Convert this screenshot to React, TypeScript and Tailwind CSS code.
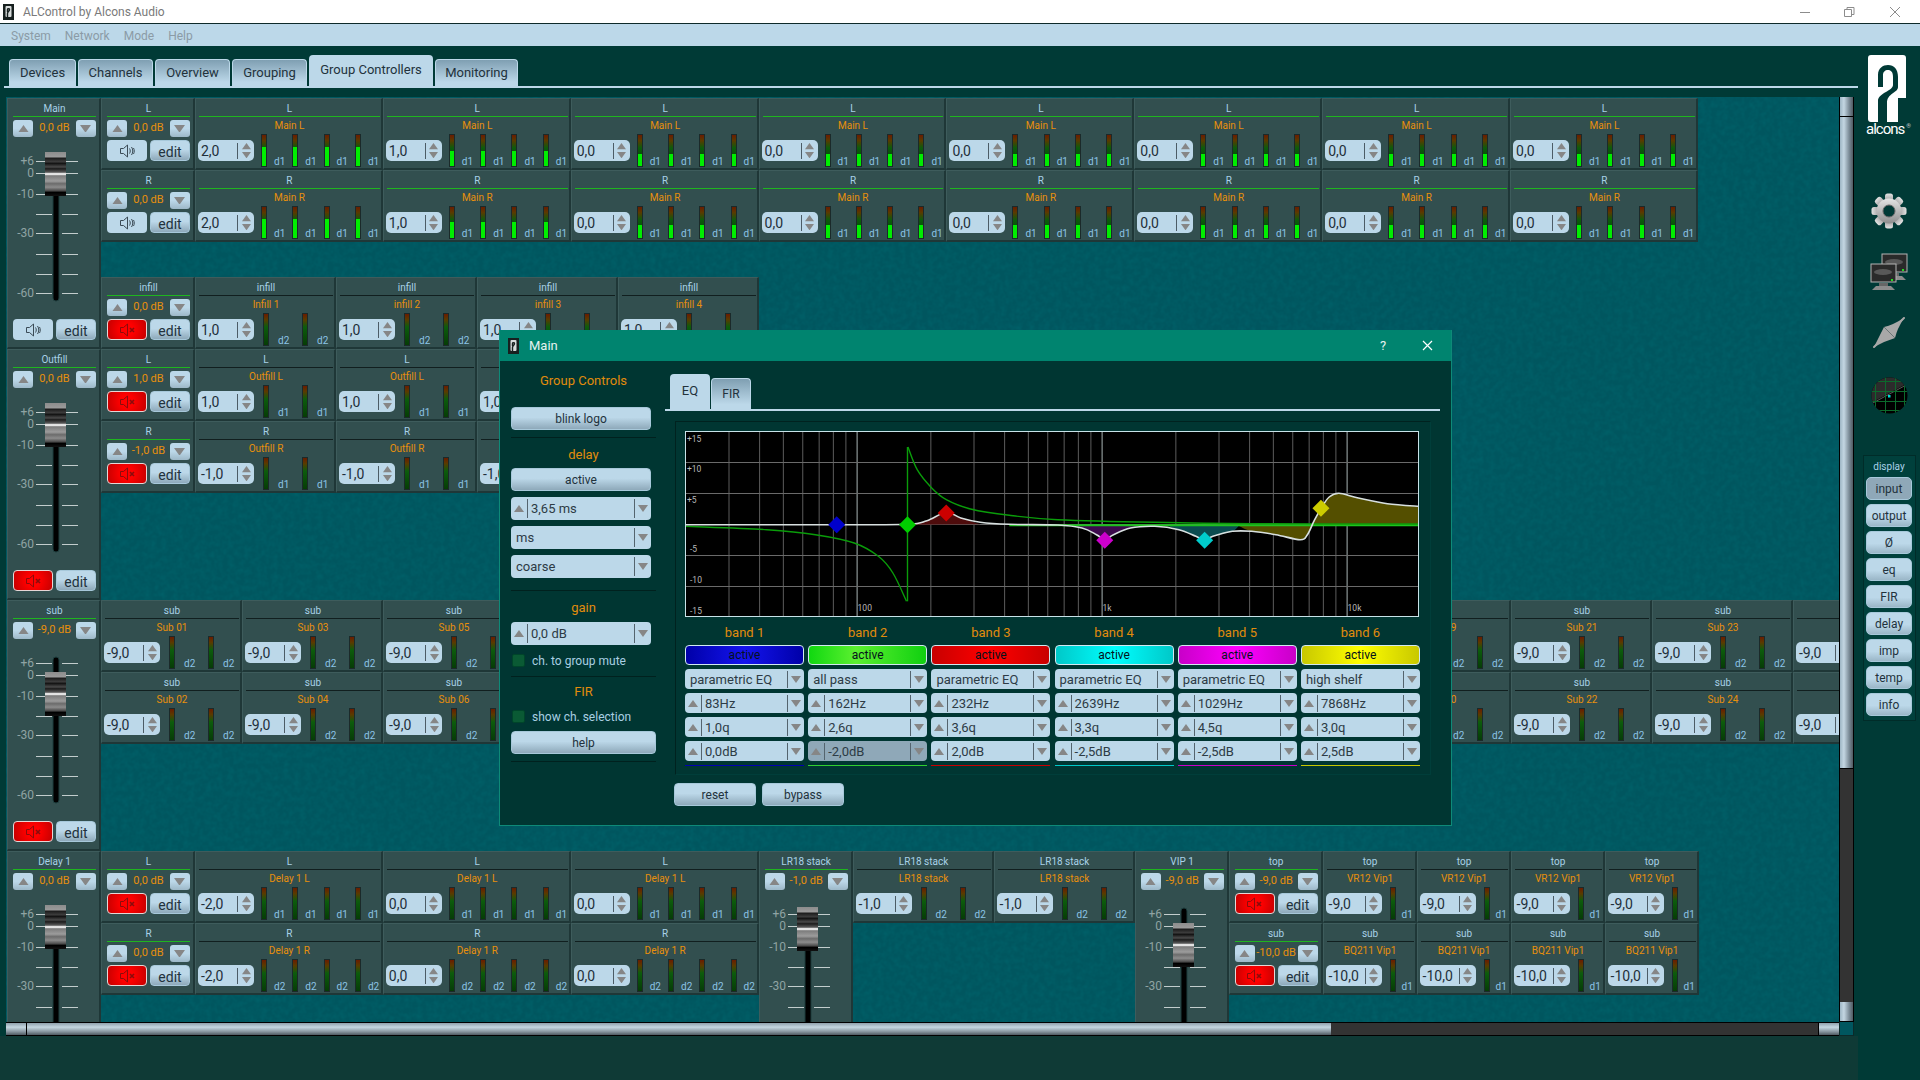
import type { ReactNode } from "react";

const FONT = "font-['Roboto','Noto_Sans',sans-serif]";
const GRADIENT_BTN =
  "bg-[linear-gradient(180deg,#bcd8e9_45%,#8ea9ba_100%)] border border-[#a7c8da] text-[#22323c]";

function Tri({ dir, size = 10 }: { dir: "up" | "down"; size?: number }) {
  return (
    <svg width={size} height={size * 0.7} viewBox="0 0 10 7">
      <polygon points={dir === "up" ? "5,0 10,7 0,7" : "0,0 10,0 5,7"} fill="#868686" />
    </svg>
  );
}

function Speaker({ muted }: { muted?: boolean }) {
  const c = muted ? "#8a0c0c" : "#3b4b56";
  return (
    <svg width="17" height="14" viewBox="0 0 17 14" fill="none" stroke={c} strokeWidth="1">
      <path d="M1.5 4.5h3l4-3.5v12l-4-3.5h-3z" />
      {muted ? (
        <path d="M11 5l4 4M15 5l-4 4" strokeWidth="1.6" />
      ) : (
        <>
          <path d="M10.5 4.5c1 1.6 1 3.4 0 5" />
          <path d="M12.5 3c1.7 2.4 1.7 5.6 0 8" />
          <path d="M14.5 4c1 2 1 4 0 6" />
        </>
      )}
    </svg>
  );
}

function MuteBtn({ muted }: { muted?: boolean }) {
  return (
    <div
      className={
        muted
          ? "w-[40px] h-[21px] rounded-[4px] flex items-center justify-center border border-[#e6d6d6] bg-[radial-gradient(circle,#ff0000_30%,#c40000_100%)]"
          : "w-[40px] h-[21px] rounded-[4px] flex items-center justify-center bg-[#bcd8e9]"
      }
    >
      <Speaker muted={muted} />
    </div>
  );
}

function EditBtn() {
  return (
    <div className={`w-[40px] h-[21px] rounded-[4px] flex items-center justify-center text-[14px] leading-none pt-[2px] ${GRADIENT_BTN}`}>
      edit
    </div>
  );
}

function StripHead({ title, gain }: { title: string; gain: string }) {
  return (
    <>
      <div className="ml-[5px] mr-[3px] h-[18px] border-b border-[#1fb51f] text-center text-[10px] leading-[19px] text-[#a9d2e8] whitespace-nowrap">
        {title}
      </div>
      <div className="ml-[5px] mr-[3px] mt-[3px] h-[17px] flex items-center justify-between">
        <div className="w-[20px] h-[17px] rounded-[3px] flex items-center justify-center bg-[linear-gradient(180deg,#bcd8e9_50%,#9db8c8)]">
          <Tri dir="up" size={11} />
        </div>
        <span className="text-[11px] text-[#e8900c]">{gain}</span>
        <div className="w-[20px] h-[17px] rounded-[3px] flex items-center justify-center bg-[linear-gradient(180deg,#bcd8e9_50%,#9db8c8)]">
          <Tri dir="down" size={11} />
        </div>
      </div>
    </>
  );
}

const TICKS: [number, string][] = [
  [9, "+6"],
  [21, "0"],
  [42, "-10"],
  [62, ""],
  [81, "-30"],
  [102, ""],
  [122, ""],
  [141, "-60"],
];

function Master({ title, gain, muted, capClass }: { title: string; gain: string; muted?: boolean; capClass: string }) {
  return (
    <div className="w-[94px] h-[251px] shrink-0 bg-[#324f4f] border-t border-l border-t-[#3e5c5c] border-l-[#3e5c5c] border-r-2 border-b-2 border-r-[#1f3737] border-b-[#1f3737]">
      <StripHead title={title} gain={gain} />
      <div className="relative h-[185px] mt-[-3px] pt-[18px]">
        <svg width="92" height="150" className="block">
          <rect x="45" y="3" width="6" height="146" rx="3" fill="#000" stroke="#1c3c3c" />
          {TICKS.map(([y, label]) => (
            <g key={y}>
              <rect x="28" y={y} width="16" height="1" fill="#c3cdcd" />
              <rect x="54" y={y} width="16" height="1" fill="#c3cdcd" />
              {label && (
                <text x="26" y={y + 4} textAnchor="end" fontSize="12" fill="#8fa3a3">
                  {label}
                </text>
              )}
            </g>
          ))}
        </svg>
        <div
          className={`absolute left-[37px] w-[21px] h-[44px] bg-[linear-gradient(180deg,#8c8c8c,#9a9a9a_11%,#1c1c1c_14%,#3c3c3c_22%,#141414_26%,#4a4a4a_34%,#1c1c1c_38%,#5a5a5a_46%,#e8e8e8_49%,#e8e8e8_51%,#7c7c7c_54%,#9c9c9c_66%,#6c6c6c_72%,#8c8c8c_80%,#4c4c4c_88%,#000_92%,#111_100%)] ${capClass}`}
        />
      </div>
      <div className="ml-[5px] mr-[3px] flex justify-between">
        <MuteBtn muted={muted} />
        <EditBtn />
      </div>
    </div>
  );
}

function Group({ title, gain, muted }: { title: string; gain: string; muted?: boolean }) {
  return (
    <div className="w-[94px] h-[72px] shrink-0 bg-[#324f4f] border-t border-l border-t-[#3e5c5c] border-l-[#3e5c5c] border-r-2 border-b-2 border-r-[#1f3737] border-b-[#1f3737]">
      <StripHead title={title} gain={gain} />
      <div className="ml-[5px] mr-[3px] mt-[3px] flex justify-between">
        <MuteBtn muted={muted} />
        <EditBtn />
      </div>
    </div>
  );
}

function Meter({ level }: { level: number }) {
  return (
    <div className="w-[6px] h-[33px] shrink-0 border border-[#1b2a2a] flex flex-col justify-end bg-[linear-gradient(180deg,#6a1c00,#5a3a00_18%,#0c5c0c_42%,#063c06)]">
      {level > 0 && <div className="bg-[#00ee00]" style={{ height: `${level}%` }} />}
    </div>
  );
}

type CellSize = "wide" | "mid" | "narrow";
const CELL_WIDTH: Record<CellSize, string> = {
  wide: "w-[187.87px]",
  mid: "w-[141px]",
  narrow: "w-[94px]",
};
const UNIT_WIDTH: Record<CellSize, string> = {
  wide: "w-[31.3px]",
  mid: "w-[39px]",
  narrow: "w-[27px]",
};
const UNIT_COUNT: Record<CellSize, number> = { wide: 4, mid: 2, narrow: 1 };
const UNIT_GAP: Record<CellSize, string> = { wide: "ml-[7px]", mid: "ml-[9px]", narrow: "ml-[8px]" };
const TAG_PAD: Record<CellSize, string> = { wide: "pl-[7px]", mid: "pl-[9px]", narrow: "pl-[6px]" };

function Cell({
  size,
  title,
  name,
  value,
  tag,
  level = 0,
  green,
}: {
  size: CellSize;
  title: string;
  name: string;
  value: string;
  tag: string;
  level?: number;
  green?: boolean;
}) {
  return (
    <div
      className={`${CELL_WIDTH[size]} h-[72px] shrink-0 overflow-hidden bg-[#324f4f] border-t border-l border-t-[#3e5c5c] border-l-[#3e5c5c] border-r-2 border-b-2 border-r-[#1f3737] border-b-[#1f3737]`}
    >
      <div
        className={`ml-[3px] mr-px h-[18px] border-b text-center text-[10px] leading-[19px] text-[#a9d2e8] ${
          green ? "border-[#1fb51f]" : "border-[#111f1f]"
        }`}
      >
        {title}
      </div>
      <div className="h-[17px] pl-[2px] text-center text-[10px] leading-[17px] text-[#e8900c] whitespace-nowrap">{name}</div>
      <div className="flex h-[33px]">
        <div className="ml-[2px] mt-[6px] w-[56px] h-[21px] shrink-0 rounded-[5px] bg-[#bcd8e9] flex items-center">
          <span className="flex-1 pl-[3px] text-[14px] text-[#1f2f3a] leading-none">{value}</span>
          <div className="w-px h-[16px] bg-[#4c5c66]" />
          <div className="w-[16px] flex flex-col items-center gap-[2px]">
            <Tri dir="up" size={9} />
            <Tri dir="down" size={9} />
          </div>
        </div>
        <div className={`flex ${UNIT_GAP[size]}`}>
          {Array.from({ length: UNIT_COUNT[size] }).map((_, i) => (
            <div key={i} className={`${UNIT_WIDTH[size]} shrink-0 flex`}>
              <Meter level={level} />
              <span className={`self-end text-[10px] leading-[11px] text-[#8cc4e6] ${TAG_PAD[size]}`}>{tag}</span>
            </div>
          ))}
        </div>
      </div>
    </div>
  );
}

function Row({ children }: { children: ReactNode }) {
  return <div className="flex shrink-0">{children}</div>;
}

const MAIN_VALUES: [string, number][] = [
  ["2,0", 60],
  ["1,0", 50],
  ["0,0", 40],
  ["0,0", 40],
  ["0,0", 40],
  ["0,0", 40],
  ["0,0", 40],
  ["0,0", 40],
];
const SUB_TOP = ["01", "03", "05", "07", "09", "11", "13", "15", "17", "19", "21", "23", "25"];
const SUB_BOTTOM = ["02", "04", "06", "08", "10", "12", "14", "16", "18", "20", "22", "24", "26"];

function Mixer() {
  return (
    <div className="relative w-[1833px] h-[925px] pl-px pt-px overflow-hidden bg-[#00565f] flex flex-col">
      {/* leather grain of the background */}
      <svg className="absolute inset-0 w-full h-full">
        <filter id="grain">
          <feTurbulence type="fractalNoise" baseFrequency="0.18" numOctaves="2" seed="4" />
          <feColorMatrix values="0 0 0 0 0  0 0 0 0 0.18  0 0 0 0 0.2  0.5 0 0 0 -0.17" />
        </filter>
        <rect width="100%" height="100%" filter="url(#grain)" />
      </svg>

      {/* Main */}
      <div className="relative flex h-[251px] shrink-0">
        <Master title="Main" gain="0,0 dB" capClass="top-[18px]" />
        <div className="flex flex-col">
          <Row>
            <Group title="L" gain="0,0 dB" />
            {MAIN_VALUES.map(([v, l], i) => (
              <Cell key={i} size="wide" title="L" name="Main L" value={v} tag="d1" level={l} green />
            ))}
          </Row>
          <Row>
            <Group title="R" gain="0,0 dB" />
            {MAIN_VALUES.map(([v, l], i) => (
              <Cell key={i} size="wide" title="R" name="Main R" value={v} tag="d1" level={l + 2} green />
            ))}
          </Row>
          <div className="mt-auto">
            <Row>
              <Group title="infill" gain="0,0 dB" muted />
              {["Infill 1", "infill 2", "infill 3", "infill 4"].map((n) => (
                <Cell key={n} size="mid" title="infill" name={n} value="1,0" tag="d2" />
              ))}
            </Row>
          </div>
        </div>
      </div>

      {/* Outfill */}
      <div className="relative flex h-[251px] shrink-0">
        <Master title="Outfill" gain="0,0 dB" muted capClass="top-[18px]" />
        <div className="flex flex-col">
          <Row>
            <Group title="L" gain="1,0 dB" muted />
            {[0, 1, 2, 3].map((i) => (
              <Cell key={i} size="mid" title="L" name="Outfill L" value="1,0" tag="d1" />
            ))}
          </Row>
          <Row>
            <Group title="R" gain="-1,0 dB" muted />
            {[0, 1, 2, 3].map((i) => (
              <Cell key={i} size="mid" title="R" name="Outfill R" value="-1,0" tag="d1" />
            ))}
          </Row>
        </div>
      </div>

      {/* Sub */}
      <div className="relative flex h-[251px] shrink-0">
        <Master title="sub" gain="-9,0 dB" muted capClass="top-[36px]" />
        <div className="flex flex-col">
          <Row>
            {SUB_TOP.map((n) => (
              <Cell key={n} size="mid" title="sub" name={`Sub ${n}`} value="-9,0" tag="d2" />
            ))}
          </Row>
          <Row>
            {SUB_BOTTOM.map((n) => (
              <Cell key={n} size="mid" title="sub" name={`Sub ${n}`} value="-9,0" tag="d2" />
            ))}
          </Row>
        </div>
      </div>

      {/* Delay */}
      <div className="relative flex h-[251px] shrink-0">
        <Master title="Delay 1" gain="0,0 dB" muted capClass="top-[18px]" />
        <div className="flex flex-col">
          <Row>
            <Group title="L" gain="0,0 dB" muted />
            {["-2,0", "0,0", "0,0"].map((v, i) => (
              <Cell key={i} size="wide" title="L" name="Delay 1 L" value={v} tag="d1" />
            ))}
          </Row>
          <Row>
            <Group title="R" gain="0,0 dB" muted />
            {["-2,0", "0,0", "0,0"].map((v, i) => (
              <Cell key={i} size="wide" title="R" name="Delay 1 R" value={v} tag="d2" />
            ))}
          </Row>
        </div>
        <Master title="LR18 stack" gain="-1,0 dB" capClass="top-[20px]" />
        <div className="flex items-start">
          <Cell size="mid" title="LR18 stack" name="LR18 stack" value="-1,0" tag="d2" />
          <Cell size="mid" title="LR18 stack" name="LR18 stack" value="-1,0" tag="d2" />
        </div>
        <Master title="VIP 1" gain="-9,0 dB" capClass="top-[36px]" />
        <div className="flex flex-col">
          <Row>
            <Group title="top" gain="-9,0 dB" muted />
            {[0, 1, 2, 3].map((i) => (
              <Cell key={i} size="narrow" title="top" name="VR12 Vip1" value="-9,0" tag="d1" />
            ))}
          </Row>
          <Row>
            <Group title="sub" gain="-10,0 dB" muted />
            {[0, 1, 2, 3].map((i) => (
              <Cell key={i} size="narrow" title="sub" name="BQ211 Vip1" value="-10,0" tag="d1" />
            ))}
          </Row>
        </div>
      </div>
    </div>
  );
}

// points are read off the reference crop, then mapped to graph pixels
const gz = (x: number, y: number): [number, number] => [(x - 31) / 2.063, (y - 34) / 3];

function smooth(points: [number, number][]) {
  const p = points.map(([x, y]) => gz(x, y));
  let d = `M${p[0][0].toFixed(1)} ${p[0][1].toFixed(1)}`;
  for (let i = 0; i < p.length - 1; i++) {
    const a = p[Math.max(i - 1, 0)];
    const b = p[i];
    const c = p[i + 1];
    const e = p[Math.min(i + 2, p.length - 1)];
    const c1 = [b[0] + (c[0] - a[0]) / 6, b[1] + (c[1] - a[1]) / 6];
    const c2 = [c[0] - (e[0] - b[0]) / 6, c[1] - (e[1] - b[1]) / 6];
    d += `C${c1[0].toFixed(1)} ${c1[1].toFixed(1)} ${c2[0].toFixed(1)} ${c2[1].toFixed(1)} ${c[0].toFixed(1)} ${c[1].toFixed(1)}`;
  }
  return d;
}

const WHITE: [number, number][] = [
  [31, 315], [340, 315], [490, 314], [530, 303], [570, 278], [600, 295], [640, 308], [700, 314], [800, 316],
  [850, 325], [880, 345], [897, 360], [915, 345], [950, 325], [1000, 320], [1050, 330], [1085, 350], [1103, 362],
  [1120, 350], [1160, 335], [1200, 335], [1250, 345], [1300, 360], [1315, 345], [1330, 300], [1345, 262],
  [1360, 232], [1380, 221], [1420, 235], [1480, 252], [1546, 260],
];
const GREEN_LEFT: [number, number][] = [
  [31, 320], [200, 330], [300, 345], [380, 370], [430, 410], [460, 460], [488, 545],
];
const GREEN_RIGHT: [number, number][] = [
  [491, 82], [510, 150], [540, 205], [570, 240], [620, 268], [700, 287], [800, 300], [1000, 308], [1200, 312], [1546, 313],
];
const RED_FILL: [number, number][] = [[490, 315], [530, 303], [570, 278], [600, 295], [640, 314]];
const PURPLE_FILL: [number, number][] = [[830, 316], [850, 325], [880, 345], [897, 360], [915, 345], [950, 325], [975, 316]];
const TEAL_FILL: [number, number][] = [[1020, 316], [1050, 330], [1085, 350], [1103, 362], [1120, 350], [1160, 335], [1175, 316]];
const OLIVE_FILL: [number, number][] = [
  [1170, 316], [1200, 335], [1250, 345], [1300, 360], [1315, 345], [1330, 300], [1345, 262], [1360, 232],
  [1380, 221], [1420, 235], [1480, 252], [1546, 260],
];
const DIAMONDS: [number, number, string][] = [
  [344, 315, "#0000cc"],
  [490, 315, "#00cc00"],
  [570, 280, "#cc0000"],
  [897, 362, "#cc00cc"],
  [1103, 362, "#00cccc"],
  [1343, 266, "#cccc00"],
];
const FREQS = [
  30, 40, 50, 60, 70, 80, 90, 200, 300, 400, 500, 600, 700, 800, 900, 2000, 3000, 4000, 5000, 6000, 7000, 8000, 9000,
];
const fx = (f: number) => 171.6 + 245 * Math.log10(f / 100);

function EqGraph() {
  const zero = gz(0, 315)[1];
  const dbLabels: [number, string][] = [
    [11, "+15"],
    [41, "+10"],
    [72, "+5"],
    [121, "-5"],
    [152, "-10"],
    [183, "-15"],
  ];
  return (
    <svg width="734" height="186" className="block bg-black">
      {FREQS.map((f) => (
        <rect key={f} x={fx(f)} y="0" width="1" height="186" fill="#5c5c5c" />
      ))}
      {[100, 1000, 10000].map((f) => (
        <rect key={f} x={fx(f)} y="0" width="1" height="186" fill="#a8b4b4" />
      ))}
      {[31, 62, 124, 155].map((y) => (
        <rect key={y} x="0" y={y} width="734" height="1" fill="#6a6a6a" />
      ))}
      <rect x="0" y="93" width="734" height="1" fill="#6a6a6a" />
      <path d={`${smooth(RED_FILL)}Z`} fill="#4e0c0c" />
      <path d={`${smooth(PURPLE_FILL)}Z`} fill="#3c0a4c" />
      <path d={`${smooth(TEAL_FILL)}Z`} fill="#0b4c50" />
      <path d={`${smooth(OLIVE_FILL)}L734 ${zero}Z`} fill="#544f00" />
      <path d={`M${gz(700, 0)[0]} ${zero + 0.5}H734`} stroke="#1cc41c" strokeWidth="2" fill="none" />
      <path d={smooth(GREEN_LEFT)} stroke="#0a9c0a" strokeWidth="1.4" fill="none" />
      <path d={smooth(GREEN_RIGHT)} stroke="#0a9c0a" strokeWidth="1.4" fill="none" />
      <path d={`M${gz(490, 0)[0]} ${gz(0, 82)[1]}V${gz(0, 545)[1]}`} stroke="#0a9c0a" strokeWidth="1.4" fill="none" />
      <path d={smooth(WHITE)} stroke="#d8e0e0" strokeWidth="1.6" fill="none" />
      {DIAMONDS.map(([x, y, c]) => {
        const [gx, gy] = gz(x, y);
        return <polygon key={c} points={`${gx},${gy - 8.5} ${gx + 8.5},${gy} ${gx},${gy + 8.5} ${gx - 8.5},${gy}`} fill={c} />;
      })}
      {dbLabels.map(([y, t]) => (
        <text key={t} x={t.startsWith("+") ? 2 : 5} y={y} fontSize="8.5" fill="#b8b8b8">
          {t}
        </text>
      ))}
      <text x={fx(100) + 1} y="180" fontSize="8.5" fill="#b8b8b8">100</text>
      <text x={fx(1000) + 1} y="180" fontSize="8.5" fill="#b8b8b8">1k</text>
      <text x={fx(10000) + 1} y="180" fontSize="8.5" fill="#b8b8b8">10k</text>
      <rect x="0.5" y="0.5" width="733" height="185" fill="none" stroke="#c8e2e8" />
    </svg>
  );
}

function DialogSelect({
  value,
  up,
  sizeClass,
  pressed,
}: {
  value: string;
  up?: boolean;
  sizeClass: string;
  pressed?: boolean;
}) {
  return (
    <div
      className={`${sizeClass} rounded-[4px] flex items-center text-[13px] text-[#2d3b45] ${
        pressed ? "bg-[#8fa8b8]" : "bg-[#bcd8e9]"
      }`}
    >
      {up && (
        <>
          <div className="w-[16px] flex justify-center">
            <Tri dir="up" />
          </div>
          <div className="w-px h-[85%] bg-[#54646e]" />
        </>
      )}
      <span className={`flex-1 pt-px whitespace-nowrap ${up ? "pl-[3px]" : "pl-[5px]"}`}>{value}</span>
      <div className="w-px h-[85%] bg-[#54646e]" />
      <div className="w-[16px] flex justify-center">
        <Tri dir="down" />
      </div>
    </div>
  );
}

function DialogBtn({ label, widthClass }: { label: string; widthClass: string }) {
  return (
    <div className={`${widthClass} h-[23px] rounded-[4px] flex items-center justify-center text-[12px] ${GRADIENT_BTN}`}>
      {label}
    </div>
  );
}

function OrangeLabel({ children, className }: { children: ReactNode; className: string }) {
  return <div className={`h-[20px] w-[145px] text-center text-[13px] leading-[20px] text-[#e08c0c] ${className}`}>{children}</div>;
}

function Divider({ className }: { className: string }) {
  return <div className={`h-px w-[145px] bg-[#00211e] ${className}`} />;
}

function CheckRow({ label, className }: { label: string; className: string }) {
  return (
    <div className={`h-[13px] flex items-center ${className}`}>
      <div className="w-[13px] h-[13px] ml-px rounded-[2px] bg-[#0a5a34] border border-[#00452a]" />
      <span className="ml-[7px] text-[12px] text-[#a9cfe2]">{label}</span>
    </div>
  );
}

const BANDS = [
  {
    name: "band 1",
    bg: "bg-[linear-gradient(90deg,#0000a8,#1414ee_50%,#0000a8)]",
    line: "bg-[#0000b0]",
    type: "parametric EQ",
    freq: "83Hz",
    q: "1,0q",
    gain: "0,0dB",
  },
  {
    name: "band 2",
    bg: "bg-[linear-gradient(90deg,#10d810,#5cf030_40%,#10d010)]",
    line: "bg-[#30d030]",
    type: "all pass",
    freq: "162Hz",
    q: "2,6q",
    gain: "-2,0dB",
    pressed: true,
  },
  {
    name: "band 3",
    bg: "bg-[linear-gradient(90deg,#c80000,#ff0000_50%,#c80000)]",
    line: "bg-[#c80000]",
    type: "parametric EQ",
    freq: "232Hz",
    q: "3,6q",
    gain: "2,0dB",
  },
  {
    name: "band 4",
    bg: "bg-[linear-gradient(90deg,#00c8c8,#00ffff_50%,#00c8c8)]",
    line: "bg-[#00c8c8]",
    type: "parametric EQ",
    freq: "2639Hz",
    q: "3,3q",
    gain: "-2,5dB",
  },
  {
    name: "band 5",
    bg: "bg-[linear-gradient(90deg,#c800c8,#ff00ff_50%,#c800c8)]",
    line: "bg-[#c800c8]",
    type: "parametric EQ",
    freq: "1029Hz",
    q: "4,5q",
    gain: "-2,5dB",
  },
  {
    name: "band 6",
    bg: "bg-[linear-gradient(90deg,#c8c800,#ffff00_50%,#c8c800)]",
    line: "bg-[#c8c800]",
    type: "high shelf",
    freq: "7868Hz",
    q: "3,0q",
    gain: "2,5dB",
  },
];

function AppGlyph({ className }: { className: string }) {
  return (
    <svg viewBox="0 0 11 16" className={className}>
      <rect width="11" height="16" fill="#17201f" />
      <rect x="2.5" y="2" width="6" height="11" rx="1" fill="#d8dcdc" />
      <path d="M4.5 8V5.5c0-1 2-1 2 0 0 2-2 2-2 4V13" stroke="#17201f" strokeWidth="1.4" fill="none" />
    </svg>
  );
}

function MainDialog() {
  return (
    <div className="absolute left-[499px] top-[330px] w-[953px] h-[496px] bg-[#003632] border border-[#0e8a78] border-t-0 flex flex-col">
      <div className="h-[31px] shrink-0 bg-[#00846f] flex items-center text-[#e6f2f0] text-[13px]">
        <AppGlyph className="w-[11px] h-[16px] ml-[8px]" />
        <span className="ml-[10px] flex-1">Main</span>
        <span className="w-[14px] text-center text-[13px] mr-[32px]">?</span>
        <svg width="11" height="11" viewBox="0 0 11 11" className="mr-[18px]" stroke="#fff" strokeWidth="1.2">
          <path d="M1 1l9 9M10 1l-9 9" />
        </svg>
      </div>
      <div className="flex flex-1">
        <div className="w-[165px] pl-[11px] shrink-0 flex flex-col">
          <OrangeLabel className="mt-[10px]">Group Controls</OrangeLabel>
          <DialogBtn label="blink logo" widthClass="w-[140px] mt-[16px]" />
          <Divider className="mt-[7px]" />
          <OrangeLabel className="mt-[7px]">delay</OrangeLabel>
          <DialogBtn label="active" widthClass="w-[140px] mt-[3px]" />
          <DialogSelect value="3,65 ms" up sizeClass="w-[140px] h-[23px] mt-[6px]" />
          <DialogSelect value="ms" sizeClass="w-[140px] h-[23px] mt-[6px]" />
          <DialogSelect value="coarse" sizeClass="w-[140px] h-[23px] mt-[6px]" />
          <Divider className="mt-[12px]" />
          <OrangeLabel className="mt-[7px]">gain</OrangeLabel>
          <DialogSelect value="0,0 dB" up sizeClass="w-[140px] h-[23px] mt-[4px]" />
          <CheckRow label="ch. to group mute" className="mt-[9px]" />
          <Divider className="mt-[9px]" />
          <OrangeLabel className="mt-[5px]">FIR</OrangeLabel>
          <CheckRow label="show ch. selection" className="mt-[8px]" />
          <DialogBtn label="help" widthClass="w-[145px] mt-[8px]" />
          <Divider className="mt-[7px]" />
        </div>
        <div className="flex-1 flex flex-col">
          <div className="flex items-end h-[35px] mt-[13px] ml-[5px] gap-px">
            <div className="w-[40px] h-[35px] rounded-t-[4px] bg-[#bcd8e9] flex items-center justify-center text-[13px] text-[#22323c] pb-px">
              EQ
            </div>
            <div className="w-[40px] h-[31px] rounded-t-[4px] border border-b-0 border-[#bcd8e9] bg-[linear-gradient(180deg,#7f9fb2,#bcd8e9_85%)] flex items-center justify-center text-[12px] text-[#22323c]">
              FIR
            </div>
          </div>
          <div className="w-[775px] h-[2px] bg-[#bcd8e9]" />
          <div className="ml-[10px] mt-[10px] w-[756px] h-[354px] border border-[#00221f] border-r-[#003e3a] border-b-[#003e3a] pl-[9px] pt-[9px]">
            <EqGraph />
            <div className="flex gap-[4.2px] mt-[8px]">
              {BANDS.map((b) => (
                <div key={b.name} className="w-[119px] flex flex-col">
                  <div className="h-[16px] text-center text-[13px] leading-[16px] text-[#e08c0c]">{b.name}</div>
                  <div
                    className={`mt-[4px] h-[20px] rounded-[4px] border border-[#d2e8f0] text-center text-[12px] leading-[19px] text-[#05121c] ${b.bg}`}
                  >
                    active
                  </div>
                  <DialogSelect value={b.type} sizeClass="h-[20px] mt-[4px]" />
                  <DialogSelect value={b.freq} up sizeClass="h-[20px] mt-[4px]" />
                  <DialogSelect value={b.q} up sizeClass="h-[20px] mt-[4px]" />
                  <DialogSelect value={b.gain} up sizeClass="h-[20px] mt-[4px]" pressed={b.pressed} />
                  <div className={`mt-[4px] h-px ${b.line}`} />
                </div>
              ))}
            </div>
          </div>
          <div className="flex gap-[6px] ml-[9px] mt-[8px]">
            <DialogBtn label="reset" widthClass="w-[82px]" />
            <DialogBtn label="bypass" widthClass="w-[82px]" />
          </div>
        </div>
      </div>
    </div>
  );
}

const TABS = [
  { label: "Devices", w: "w-[67px]" },
  { label: "Channels", w: "w-[75px]" },
  { label: "Overview", w: "w-[75px]" },
  { label: "Grouping", w: "w-[75px]" },
  { label: "Group Controllers", w: "w-[124px]", active: true },
  { label: "Monitoring", w: "w-[83px]" },
];

function Tabs() {
  return (
    <div className="flex items-end gap-[2px] h-[31px] mt-[9px] ml-[9px]">
      {TABS.map((t) =>
        t.active ? (
          <div key={t.label} className={`${t.w} h-[31px] rounded-t-[4px] bg-[#bcd8e9] flex items-center justify-center text-[13px] text-[#22323c] pb-[2px]`}>
            {t.label}
          </div>
        ) : (
          <div
            key={t.label}
            className={`${t.w} h-[27px] rounded-t-[4px] border border-b-0 border-[#bcd8e9] bg-[linear-gradient(180deg,#7f9fb2,#bcd8e9_85%)] flex items-center justify-center text-[13px] text-[#22323c]`}
          >
            {t.label}
          </div>
        ),
      )}
    </div>
  );
}

function Gear() {
  return (
    <svg width="36" height="36" viewBox="-18 -18 36 36">
      <defs>
        <linearGradient id="gear" x1="0" y1="0" x2="0" y2="1">
          <stop offset="0" stopColor="#e4e4e4" />
          <stop offset="1" stopColor="#8e8e8e" />
        </linearGradient>
      </defs>
      <g fill="url(#gear)">
        {[0, 45, 90, 135, 180, 225, 270, 315].map((a) => (
          <rect key={a} x="-4" y="-17.5" width="8" height="9" rx="2.5" transform={`rotate(${a})`} />
        ))}
        <circle r="12.5" />
      </g>
      <circle r="6" fill="#003a36" stroke="#666" strokeWidth="1" />
    </svg>
  );
}

function Monitors() {
  const screen = (x: number, y: number, dot: number) => (
    <g>
      <rect x={x} y={y} width="25" height="18" fill="#2a2a2a" stroke="#b4b4b4" />
      <ellipse cx={x + 12} cy={y + 8} rx="9" ry="3" fill="#6c6c6c" opacity="0.7" />
      <rect x={dot} y={y + 15} width="2" height="2" fill="#22dd22" />
      <rect x={x + 8} y={y + 19} width="9" height="3" fill="#666" />
      <polygon points={`${x + 5},${y + 22} ${x + 20},${y + 22} ${x + 24},${y + 26} ${x + 1},${y + 26}`} fill="#8c8c8c" />
    </g>
  );
  return (
    <svg width="38" height="38" viewBox="0 0 38 38">
      {screen(12, 1, 32)}
      {screen(1, 11, 21)}
    </svg>
  );
}

function Needle() {
  return (
    <svg width="32" height="32" viewBox="0 0 32 32">
      <path d="M1 30Q8 16 11 10Q20 8 31 1Q24 12 22 21Q12 24 1 30Z" fill="#a8a8a8" />
      <path d="M1 30L31 1" stroke="#a8a8a8" strokeWidth="2" strokeLinecap="round" />
      <path d="M11 10L22 21" stroke="#5c6a6a" strokeWidth="0.8" />
    </svg>
  );
}

function Radar() {
  return (
    <svg width="37" height="37" viewBox="0 0 37 37">
      <defs>
        <clipPath id="disc">
          <circle cx="18.5" cy="18.5" r="18" />
        </clipPath>
      </defs>
      <g clipPath="url(#disc)">
        <rect width="37" height="37" fill="#000" />
        <polygon points="0,0 37,0 37,6 0,26" fill="#2c2c2c" />
        <path d="M0 27L37 7" stroke="#585858" strokeWidth="1" />
        {[4, 14, 24, 33].map((v) => (
          <g key={v}>
            <rect x={v} y="0" width="1" height="37" fill="#0c6a2c" />
            <rect x="0" y={v} width="37" height="1" fill="#0c6a2c" />
          </g>
        ))}
      </g>
      <rect x="17" y="18" width="2.5" height="2.5" fill="#00dcdc" />
    </svg>
  );
}

function Sidebar() {
  return (
    <div className="w-[62px] shrink-0 flex flex-col items-center">
      <svg width="38" height="67" viewBox="0 0 38 67" className="mt-[9px] mr-[5px]">
        <path d="M3 0H35Q38 0 38 3V43H30V67H3Q0 67 0 64V3Q0 0 3 0Z" fill="#fff" />
        <path
          d="M10 32V20C10 13 15 10 20 10C26 10 30 14 30 22V32C30 38 19 38 19 48V67H10V46C10 38 25 36 25 30V22C25 17 23 15 20 15C17 15 15 17 15 20V32Z"
          fill="#003a36"
        />
      </svg>
      <div className="flex items-start mr-[1px] h-[16px] text-white text-[15px] leading-[15px] tracking-[-1px]">
        alcons<span className="text-[6px] leading-[8px] tracking-normal ml-[2px] text-[#c0c8c8]">®</span>
      </div>
      <div className="mt-[55px]">
        <Gear />
      </div>
      <div className="mt-[24px]">
        <Monitors />
      </div>
      <div className="mt-[26px]">
        <Needle />
      </div>
      <div className="mt-[28px]">
        <Radar />
      </div>
      <div className="mt-[41px] w-[53px] h-[266px] bg-[#00403c] border border-[#002c29] flex flex-col items-center">
        <div className="h-[21px] text-[10px] leading-[21px] text-[#a9d2e8]">display</div>
        {["input", "output", "Ø", "eq", "FIR", "delay", "imp", "temp", "info"].map((l) => (
          <div
            key={l}
            className={
              l === "input"
                ? "w-[46px] h-[23px] mb-[4px] rounded-[5px] bg-[#8fa8b8] border border-[#a7c8da] text-[#22323c] flex items-center justify-center text-[12px]"
                : "w-[46px] h-[23px] mb-[4px] rounded-[5px] bg-[linear-gradient(180deg,#bcd8e9_55%,#9ab6c7)] border border-[#a7c8da] text-[#22323c] flex items-center justify-center text-[12px]"
            }
          >
            {l}
          </div>
        ))}
      </div>
    </div>
  );
}

function ScrollButtonV() {
  return <div className="h-[20px] border-b border-black bg-[linear-gradient(90deg,#9db5c4,#c4d6e2_30%,#7c8c98_70%,#4f5a62)]" />;
}

export default function App() {
  return (
    <div className={`relative w-[1920px] h-[1080px] overflow-hidden bg-[#003a36] flex flex-col ${FONT}`}>
      {/* Window title */}
      <div className="h-[24px] shrink-0 bg-white border-b border-[#0e2a2a] flex items-center">
        <AppGlyph className="w-[11px] h-[16px] ml-[3px]" />
        <span className="ml-[9px] flex-1 text-[12px] text-[#7a7a7a]">ALControl by Alcons Audio</span>
        <svg width="100" height="14" viewBox="0 0 100 14" className="mr-[20px]" fill="none" stroke="#8c8c8c">
          <path d="M0 7.5H10" />
          <path d="M44.5 4.5h7v7h-7zM47 4.5V2.5h7v7h-2.5" />
          <path d="M90 2l10 10M100 2L90 12" />
        </svg>
      </div>
      {/* Menu */}
      <div className="h-[22px] shrink-0 bg-[#bcd8e9] flex items-center gap-[14px] pl-[11px] pt-px text-[12px] text-[#8b9ba6]">
        <span>System</span>
        <span>Network</span>
        <span>Mode</span>
        <span>Help</span>
      </div>
      <div className="flex flex-1">
        <div className="w-[1858px] shrink-0 flex flex-col">
          <Tabs />
          <div className="ml-[4px] h-[2px] bg-[#bcd8e9]" />
          <div className="ml-[6px] mt-[9px] w-[1848px] flex flex-col">
            <div className="flex h-[925px]">
              <Mixer />
              <div className="w-[15px] flex flex-col bg-[#333] border-x border-black">
                <ScrollButtonV />
                <div className="h-[652px] border-b border-black bg-[linear-gradient(90deg,#9db5c4,#c4d6e2_30%,#7c8c98_70%,#4f5a62)]" />
                <div className="flex-1" />
                <ScrollButtonV />
              </div>
            </div>
            <div className="flex h-[14px]">
              <div className="w-[1833px] flex bg-[#333] border-y border-black">
                <div className="w-[21px] border-r border-black bg-[linear-gradient(180deg,#8fa0ac,#c4d6e0_35%,#8c9aa4_70%,#4f5a62)]" />
                <div className="w-[1304px] bg-[linear-gradient(180deg,#8fa0ac,#c4d6e0_35%,#8c9aa4_70%,#4f5a62)]" />
                <div className="flex-1" />
                <div className="w-[21px] border-l border-black bg-[linear-gradient(180deg,#8fa0ac,#c4d6e0_35%,#8c9aa4_70%,#4f5a62)]" />
              </div>
              <div className="w-[15px] bg-[#00565f] border border-t-0 border-[#0c2a2a]" />
            </div>
          </div>
          <div className="flex-1 bg-[#0f3a36]" />
        </div>
        <Sidebar />
      </div>
      <MainDialog />
    </div>
  );
}
